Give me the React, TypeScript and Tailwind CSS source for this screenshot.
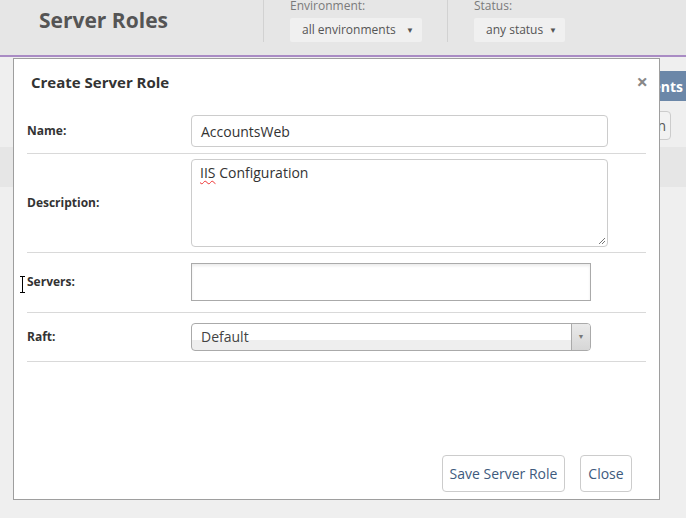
import React from 'react';

const font = { fontFamily: '"Open Sans", "Liberation Sans", sans-serif' };

function HeaderSelect({ label, value, width }: { label: string; value: string; width: string }) {
  return (
    <div className="flex flex-col">
      <span className="text-[12px] leading-[14px] text-[#7a7a7a] -mt-[1px]">{label}</span>
      <div className={`mt-[5px] h-[24px] ${width} rounded-[2px] bg-[#f0f0f0] flex items-center justify-between pl-[12px] pr-[8px]`}>
        <span className="text-[12px] text-[#555]">{value}</span>
        <span className="text-[8px] text-[#555]">▼</span>
      </div>
    </div>
  );
}

function Row({ label, children, py }: { label: string; children: React.ReactNode; py: string }) {
  return (
    <div className={`flex items-center border-b border-[#d9d9d9] ${py}`}>
      <div className="w-[164px] shrink-0 text-[12px] font-bold text-[#333]">{label}</div>
      {children}
    </div>
  );
}

export default function App() {
  return (
    <div className="relative w-[686px] h-[518px] overflow-hidden bg-[#efefef]" style={font}>
      {/* page header */}
      <div className="h-[57px] bg-[#e6e6e6] border-b-2 border-[#a98bc4] flex items-start">
        <div className="w-[264px] h-[42px] border-r border-[#d2d2d2] pl-[39px] pt-[6px]">
          <h1 className="text-[21px] font-bold text-[#555] leading-[28px]">Server Roles</h1>
        </div>
        <div className="w-[184px] h-[42px] border-r border-[#d2d2d2] pl-[26px]">
          <HeaderSelect label="Environment:" value="all environments" width="w-[132px]" />
        </div>
        <div className="pl-[26px]">
          <HeaderSelect label="Status:" value="any status" width="w-[91px]" />
        </div>
      </div>

      {/* page content behind the dialog */}
      <div className="flex flex-col items-end pt-[14px]">
        <div className="h-[30px] bg-[#6b87a8] text-white font-bold text-[14px] flex items-center pl-[12px] pr-[4px] -mr-[1px]">
          Environments
        </div>
        <div className="mt-[10px] mr-[15px] h-[29px] border border-[#ccc] rounded-[4px] bg-[#f2f2f2] text-[#555] text-[14px] flex items-center px-[4px]">
          Action
        </div>
        <div className="mt-[7px] w-full h-[40px] bg-[#e6e6e6]"></div>
      </div>

      {/* dialog */}
      <div className="absolute left-[13px] top-[58px] w-[647px] h-[442px] bg-white border border-[#9e9e9e] flex flex-col">
        <div className="h-[50px] flex items-center justify-between pl-[17px] pr-[11px] pb-[4px]">
          <span className="text-[15px] font-bold text-[#333]">Create Server Role</span>
          <span className="text-[20px] font-bold text-[#888] leading-none">×</span>
        </div>
        <div className="px-[13px]">
          <Row label="Name:" py="pt-[6px] pb-[6px]">
            <div className="w-[417px] h-[32px] border border-[#ccc] rounded-[4px] flex items-center pl-[9px] text-[14px] text-[#333]">
              AccountsWeb
            </div>
          </Row>
          <Row label="Description:" py="pt-[5px] pb-[5px]">
            <div className="relative w-[417px] h-[88px] border border-[#ccc] rounded-[4px] pl-[8px] pt-[2px] text-[14px] text-[#333]">
              <span className="underline decoration-wavy decoration-[#e33] decoration-[1px] underline-offset-[2px]">IIS</span> Configuration
              <svg className="absolute right-[1px] bottom-[1px]" width="8" height="8" viewBox="0 0 8 8">
                <path d="M7 1L1 7M7 4L4 7" stroke="#777" strokeWidth="1" />
              </svg>
            </div>
          </Row>
          <Row label="Servers:" py="pt-[10px] pb-[11px]">
            <div className="w-[400px] h-[38px] border border-[#aaa] bg-white shadow-[inset_0_2px_3px_rgba(0,0,0,0.08)]"></div>
          </Row>
          <Row label="Raft:" py="pt-[10px] pb-[10px]">
            <div className="w-[400px] h-[28px] border border-[#aaa] rounded-[4px] flex overflow-hidden bg-[linear-gradient(#fff_60%,#eee_60%)]">
              <div className="flex-1 flex items-center pl-[9px] pb-[1px] text-[14px] text-[#444]">Default</div>
              <div className="w-[19px] border-l border-[#aaa] bg-[linear-gradient(#eaeaea,#d6d6d6)] flex items-center justify-center">
                <span className="text-[7px] text-[#777]">▼</span>
              </div>
            </div>
          </Row>
        </div>
        <div className="flex-1"></div>
        <div className="flex justify-end gap-[15px] pr-[27px] pb-[7px]">
          <button className="h-[37px] w-[123px] border border-[#ccc] rounded-[4px] text-[14px] text-[#3e5a7d] bg-white">
            Save Server Role
          </button>
          <button className="h-[37px] w-[52px] border border-[#ccc] rounded-[4px] text-[14px] text-[#3e5a7d] bg-white">
            Close
          </button>
        </div>
      </div>

      {/* I-beam mouse cursor */}
      <svg className="absolute left-[19px] top-[276px]" width="7" height="17" viewBox="0 0 7 17">
        <path d="M1 0.5H6M3.5 0.5V16.5M1 16.5H6" stroke="#000" strokeWidth="1" fill="none" />
      </svg>
    </div>
  );
}
